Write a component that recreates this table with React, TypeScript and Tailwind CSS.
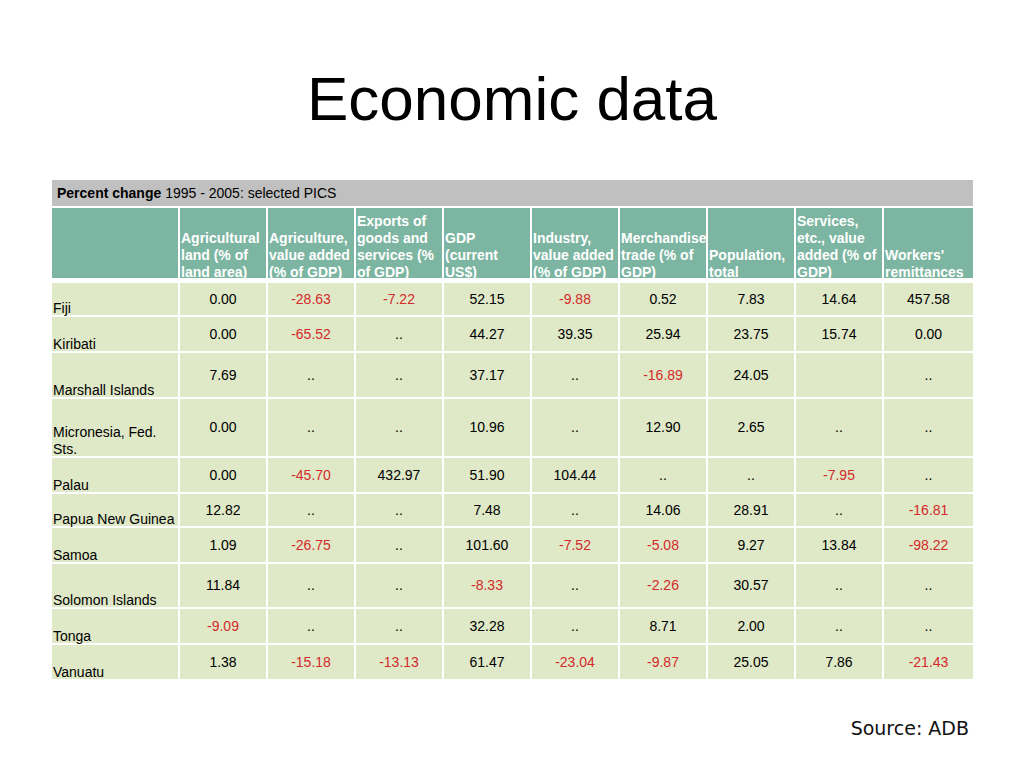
import React from 'react';

// Column headers, one entry per line, as wrapped in the slide
const headers: string[][] = [
    [],
    ["Agricultural", "land (% of", "land area)"],
    ["Agriculture,", "value added", "(% of GDP)"],
    ["Exports of", "goods and", "services (%", "of GDP)"],
    ["GDP", "(current", "US$)"],
    ["Industry,", "value added", "(% of GDP)"],
    ["Merchandise", "trade (% of", "GDP)"],
    ["Population,", "total"],
    ["Services,", "etc., value", "added (% of", "GDP)"],
    ["Workers'", "remittances"],
];

interface Row {
    country: string[];
    height: string;
    values: string[];
}

const rows: Row[] = [
    { country: ["Fiji"], height: "h-[32px]", values: ["0.00", "-28.63", "-7.22", "52.15", "-9.88", "0.52", "7.83", "14.64", "457.58"] },
    { country: ["Kiribati"], height: "h-[34px]", values: ["0.00", "-65.52", "..", "44.27", "39.35", "25.94", "23.75", "15.74", "0.00"] },
    { country: ["Marshall Islands"], height: "h-[44px]", values: ["7.69", "..", "..", "37.17", "..", "-16.89", "24.05", "", ".."] },
    { country: ["Micronesia, Fed.", "Sts."], height: "h-[57px]", values: ["0.00", "..", "..", "10.96", "..", "12.90", "2.65", "..", ".."] },
    { country: ["Palau"], height: "h-[34px]", values: ["0.00", "-45.70", "432.97", "51.90", "104.44", "..", "..", "-7.95", ".."] },
    { country: ["Papua New Guinea"], height: "h-[32px]", values: ["12.82", "..", "..", "7.48", "..", "14.06", "28.91", "..", "-16.81"] },
    { country: ["Samoa"], height: "h-[34px]", values: ["1.09", "-26.75", "..", "101.60", "-7.52", "-5.08", "9.27", "13.84", "-98.22"] },
    { country: ["Solomon Islands"], height: "h-[43px]", values: ["11.84", "..", "..", "-8.33", "..", "-2.26", "30.57", "..", ".."] },
    { country: ["Tonga"], height: "h-[34px]", values: ["-9.09", "..", "..", "32.28", "..", "8.71", "2.00", "..", ".."] },
    { country: ["Vanuatu"], height: "h-[34px]", values: ["1.38", "-15.18", "-13.13", "61.47", "-23.04", "-9.87", "25.05", "7.86", "-21.43"] },
];

export default function App() {
    return (
        <div className="w-[1024px] h-[768px] bg-white text-black font-['Liberation_Sans',Arial,sans-serif] flex flex-col">
            {/* Slide title */}
            <h1 className="mt-[68px] text-center text-[62px] leading-[62px] font-normal">Economic data</h1>

            {/* Data table */}
            <div className="ml-[52px] mt-[50px] w-[921px]">
                <div className="h-[26px] bg-[#c0c0c0] flex items-center pl-[5px] text-[14px]">
                    <span className="font-bold">Percent change</span>
                    <span>&nbsp;1995 - 2005: selected PICS</span>
                </div>

                <div className="mt-[2px] grid grid-cols-[126px_repeat(8,86px)_89px] gap-[2px] text-[14px]">
                    {headers.map((lines, i) => (
                        <div key={i} className="h-[70px] mb-[3px] bg-[#7cb5a1] flex flex-col justify-end pl-[1px] text-white font-bold leading-[17px]">
                            {/* last line runs under the first data row, as in the slide */}
                            <div className="flex flex-col translate-y-[3px]">
                                {lines.map((l) => (
                                    <span key={l} className="whitespace-nowrap">{l}</span>
                                ))}
                            </div>
                        </div>
                    ))}

                    {rows.map((row) => (
                        <React.Fragment key={row.country.join(" ")}>
                            <div className={`${row.height} relative bg-[#dfe8c7] flex flex-col justify-end pl-[1px] leading-[17px]`}>
                                <div className="flex flex-col translate-y-[2px]">
                                    {row.country.map((c) => (
                                        <span key={c} className="whitespace-nowrap">{c}</span>
                                    ))}
                                </div>
                            </div>
                            {row.values.map((v, j) => (
                                <div
                                    key={j}
                                    className={`${row.height} relative bg-[#dfe8c7] flex items-center justify-center leading-[17px] ${v.startsWith("-") ? "text-[#d42a2a]" : "text-black"}`}
                                >
                                    {v}
                                </div>
                            ))}
                        </React.Fragment>
                    ))}
                </div>
            </div>

            {/* Footer source note */}
            <div className="mt-auto mb-[29px] pr-[55px] text-right text-[19px] leading-[22px] text-[#111] font-['DejaVu_Sans',sans-serif]">
                Source: ADB
            </div>
        </div>
    );
}
